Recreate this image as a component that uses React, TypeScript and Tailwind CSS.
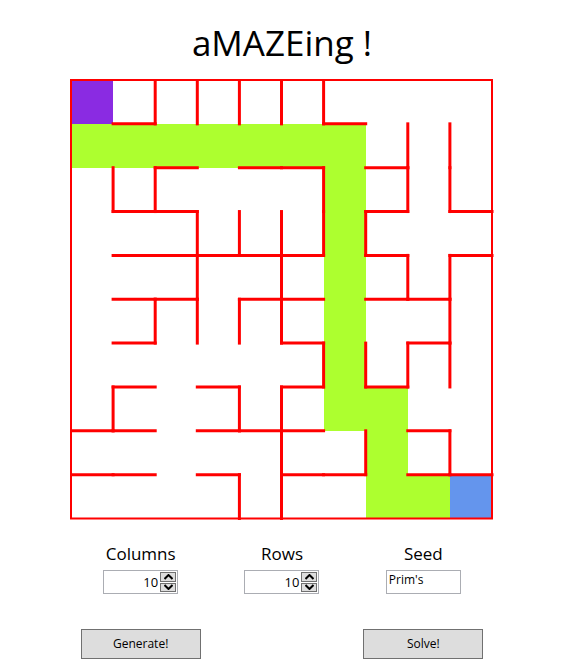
import React from "react";

const X = Array.from({ length: 11 }, (_, i) => 71 + 42.1 * i);
const Y = Array.from({ length: 11 }, (_, i) => 80 + 43.85 * i);

// vertical walls: row -> column boundary indexes
const vWalls: number[][] = [
  [2, 3, 4, 5, 6],
  [8, 9],
  [1, 2, 6, 8, 9],
  [3, 4, 5, 6, 7],
  [3, 5, 8, 9],
  [2, 3, 4, 5, 9],
  [6, 7, 8, 9],
  [1, 4, 5],
  [5, 7, 9],
  [4, 5],
];

// horizontal walls: row boundary index -> columns
const hWalls: Record<number, number[]> = {
  1: [1, 6],
  2: [2, 4, 5, 7],
  3: [1, 2, 7, 9],
  4: [1, 2, 3, 4, 5, 7, 9],
  5: [1, 2, 4, 5, 7, 8],
  6: [1, 5, 8],
  7: [1, 3, 5, 7],
  8: [0, 1, 3, 4, 5, 8],
  9: [0, 1, 3, 5, 6, 8, 9],
};

const path: [number, number][] = [
  [1, 0], [1, 1], [1, 2], [1, 3], [1, 4], [1, 5], [1, 6],
  [2, 6], [3, 6], [4, 6], [5, 6], [6, 6], [7, 6],
  [7, 7], [8, 7], [9, 7], [9, 8],
];

const Cell = ({ r, c, fill }: { r: number; c: number; fill: string }) => (
  <rect
    x={Math.round(X[c])}
    y={Math.round(Y[r])}
    width={Math.round(X[c + 1]) - Math.round(X[c])}
    height={Math.round(Y[r + 1]) - Math.round(Y[r])}
    fill={fill}
    shapeRendering="crispEdges"
  />
);

const Maze = () => (
  <svg width={424} height={442} viewBox="70 79 424 442" className="block">
    <Cell r={0} c={0} fill="#8a2be2" />
    {path.map(([r, c]) => (
      <Cell key={`${r}-${c}`} r={r} c={c} fill="#adff2f" />
    ))}
    <Cell r={9} c={9} fill="#6495ed" />
    <g stroke="#ff0000" strokeWidth={3} strokeLinecap="square">
      {vWalls.map((cols, r) =>
        cols.map((c) => (
          <line key={`v${r}-${c}`} x1={X[c]} y1={Y[r]} x2={X[c]} y2={Y[r + 1]} />
        ))
      )}
      {Object.entries(hWalls).map(([r, cols]) =>
        cols.map((c) => (
          <line key={`h${r}-${c}`} x1={X[c]} y1={Y[+r]} x2={X[c + 1]} y2={Y[+r]} />
        ))
      )}
    </g>
    <rect x={71} y={80} width={421} height={438.5} fill="none" stroke="#ff0000" strokeWidth={2} />
  </svg>
);

const Arrow = ({ up }: { up?: boolean }) => (
  <svg width="9" height="6" viewBox="0 0 9 6">
    <path d={up ? "M0.5 5 L4.5 1 L8.5 5" : "M0.5 1 L4.5 5 L8.5 1"} fill="none" stroke="#000" strokeWidth="2" />
  </svg>
);

const Spinner = ({ value }: { value: string }) => (
  <div className="flex h-[24px] w-[75px] border border-[#abadb3] bg-white">
    <div className="flex-1 pr-[2px] text-right text-[13px] leading-[22px] text-black">{value}</div>
    <div className="flex w-[17px] flex-col gap-[1px] py-[1px] pr-[1px]">
      <div className="flex flex-1 items-center justify-center border border-[#707070] bg-[#dddddd]">
        <Arrow up />
      </div>
      <div className="flex flex-1 items-center justify-center border border-[#707070] bg-[#dddddd]">
        <Arrow />
      </div>
    </div>
  </div>
);

const Field = ({ label, children }: { label: string; children: React.ReactNode }) => (
  <div className="flex flex-col items-center">
    <div className="text-[17px] leading-[24px] text-black">{label}</div>
    <div className="mt-[4px]">{children}</div>
  </div>
);

export default function App() {
  return (
    <div className="flex h-[667px] w-[564px] flex-col bg-white font-['Open_Sans',sans-serif]">
      <h1 className="pt-[20px] text-center text-[35px] leading-[46px] text-black">aMAZEing !</h1>
      <div className="ml-[70px] mt-[13px]">
        <Maze />
      </div>
      <div className="ml-[70px] mt-[21px] grid w-[424px] grid-cols-3">
        <Field label="Columns">
          <Spinner value="10" />
        </Field>
        <Field label="Rows">
          <Spinner value="10" />
        </Field>
        <Field label="Seed">
          <div className="h-[24px] w-[75px] border border-[#abadb3] bg-white px-[2px] text-[12px] leading-[18px] text-black">
            Prim's
          </div>
        </Field>
        <div className="mt-[35px] flex justify-center">
          <button className="h-[30px] w-[120px] border border-[#707070] bg-[#dddddd] text-[12px] text-black">
            Generate!
          </button>
        </div>
        <div />
        <div className="mt-[35px] flex justify-center">
          <button className="h-[30px] w-[120px] border border-[#707070] bg-[#dddddd] text-[12px] text-black">
            Solve!
          </button>
        </div>
      </div>
    </div>
  );
}
